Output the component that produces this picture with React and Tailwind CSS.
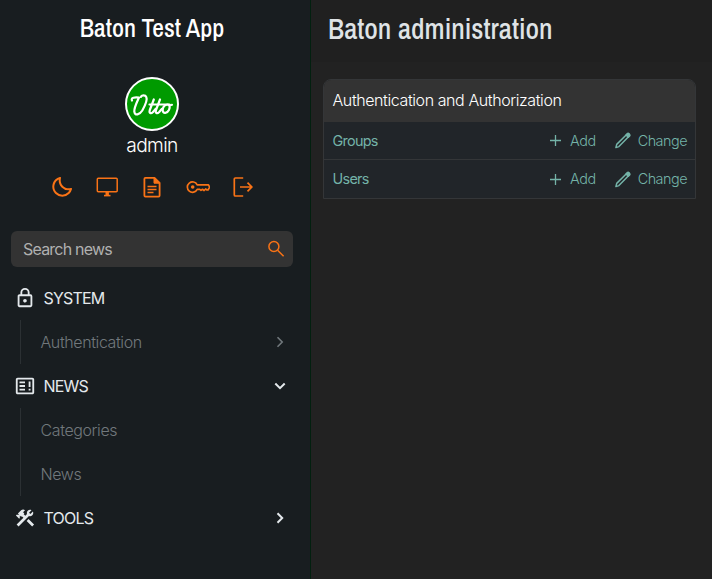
import React from "react";
import { BiMoon } from "react-icons/bi";

const stroke = { fill: "none", stroke: "currentColor" };

const Monitor = () => (
  <svg className="size-6" viewBox="0 0 24 24" {...stroke} strokeWidth="1.5">
    <rect x="2.300" y="3.300" width="19.900" height="13.500" rx="1" />
    <path d="M9 20.600h6.500" strokeWidth="1.600" />
    <path d="M12.200 17v4" strokeWidth="3.400" />
  </svg>
);
const Document = () => (
  <svg className="size-6" viewBox="0 0 24 24" {...stroke} strokeWidth="1.8">
    <path d="M14.5 2.9H5.4a1 1 0 0 0-1 1v16.7a1 1 0 0 0 1 1h13.2a1 1 0 0 0 1-1V8z" strokeLinejoin="round" />
    <path d="M14 3v5.2h5.5z" fill="currentColor" strokeWidth="1" />
    <path d="M7.500 11.500h9M7.500 14.500h9M7.500 17.500h6" strokeWidth="1.4" />
  </svg>
);
const Key = () => (
  <svg className="size-6" viewBox="0 0 24 24" {...stroke} strokeWidth="1.7" strokeLinejoin="round">
    <path d="M11.200 9.800A5.200 5.200 0 1 0 11.200 14.400H13.800l1.200.9 1.500-1 1.600 1.200 1.500-1.500 1.400 1H22L23.700 12 22.300 9.800z" />
    <circle cx="6.700" cy="12" r="1.8" fill="currentColor" stroke="none" />
  </svg>
);
const Logout = () => (
  <svg className="size-6" viewBox="0 0 24 24" {...stroke} strokeWidth="1.7">
    <path d="M12.200 3H4.300a1 1 0 0 0-1 1v16a1 1 0 0 0 1 1H12.200M9 12h11.500M16.500 7.700l4.300 4.300-4.300 4.300" />
  </svg>
);
const Lock = () => (
  <svg className="size-[22px]" viewBox="0 0 24 24" fill="currentColor">
    <path d="M12,17C10.89,17 10,16.1 10,15C10,13.89 10.89,13 12,13A2,2 0 0,1 14,15A2,2 0 0,1 12,17M18,20V10H6V20H18M18,8A2,2 0 0,1 20,10V20A2,2 0 0,1 18,22H6C4.89,22 4,21.1 4,20V10C4,8.89 4.89,8 6,8H7V6A5,5 0 0,1 12,1A5,5 0 0,1 17,6V8H18M12,3A3,3 0 0,0 9,6V8H15V6A3,3 0 0,0 12,3Z" />
  </svg>
);
const Newspaper = () => (
  <svg className="size-[22px]" viewBox="0 0 24 24" fill="currentColor">
    <path d="M20 5v14H4V5h16m0-2H4c-1.1 0-2 .9-2 2v14c0 1.1.9 2 2 2h16c1.100 0 2-.9 2-2V5c0-1.100-.9-2-2-2m-2 12h-2v2h2v-2m-6 0H6v2h6v-2m0-8H6v2h6V7m0 4H6v2h6v-2m6-4h-2v6h2V7Z" />
  </svg>
);
const Tools = () => (
  <svg className="size-[22px]" viewBox="0 0 24 24" fill="currentColor">
    <path d="M13.78 15.3L19.78 21.3L21.89 19.14L15.89 13.14L13.78 15.3M17.5 10.1C17.11 10.1 16.69 10.05 16.36 9.91L4.97 21.25L2.86 19.14L10.27 11.74L8.5 9.96L7.78 10.66L6.33 9.25V12.11L5.63 12.81L2.11 9.25L2.81 8.55H5.62L4.22 7.14L7.78 3.58C8.95 2.41 10.83 2.41 12 3.58L9.89 5.74L11.3 7.14L10.59 7.85L12.38 9.63L14.2 7.75C14.06 7.42 14 7 14 6.63C14 4.66 15.56 3.11 17.5 3.11C18.09 3.11 18.61 3.25 19.08 3.53L16.41 6.2L17.91 7.7L20.58 5.03C20.86 5.5 21 6 21 6.63C21 8.55 19.45 10.1 17.5 10.1Z" />
  </svg>
);
const Search = () => (
  <svg className="size-5" viewBox="0 0 20 20" {...stroke} strokeWidth="1.5">
    <circle cx="7.900" cy="7.500" r="5" />
    <path d="M11.600 11.200l6 6" />
  </svg>
);
const Chevron = ({ down, thin }) => (
  <svg className={down ? "size-4 rotate-90" : "size-4"} viewBox="0 0 16 16" {...stroke} strokeWidth={thin ? 1.6 : 2}>
    <path d="M5.500 3.300L10.200 8l-4.700 4.700" />
  </svg>
);
const Plus = () => (
  <svg className="size-4" viewBox="0 0 16 16" {...stroke} strokeWidth="1.3">
    <path d="M8.500 3v11M3 8.500h11" />
  </svg>
);
const Pencil = () => (
  <svg className="size-[18px]" viewBox="0 0 18 18" {...stroke} strokeWidth="1.500" strokeLinejoin="round">
    <path d="M1.900 16.600l.8-3.200L12.900 3.200c.8-.8 1.500-.7 2.100-.1s.7 1.400 0 2.100L4.900 15.600z" />
    <path d="M12 4l2.300 2.300 1.500-1.600c.6-.7-1.500-2.800-2.200-2.200z" fill="currentColor" />
  </svg>
);

const Avatar = () => (
  <svg className="size-[54px]" viewBox="0 0 54 54">
    <circle cx="27" cy="27" r="26" fill="#009a00" stroke="#fff" strokeWidth="2" />
    <g fill="none" stroke="#fff" strokeWidth="2.200" strokeLinecap="round" strokeLinejoin="round">
      <path d="M7 23.500c-1.500-3 3-3.500 7-3C12 25 9 31 9.300 34.500c.5 5 5.500 3 8-1 2.500-4.500 5.500-10.500 4-13.500-1-2.200-5-2-5.500 0" />
      <path d="M28.800 22.500l-4 10.500c-1 3.300 1.200 4 3 2.300l3-3.500M24.500 27.500h20" />
      <path d="M35 22.500l-4 10.500c-1 3.300 1.200 4 3 2.300l3-3.500" />
      <path d="M42.500 27.500c-3.500 0-5 3.500-4.800 6 .4 3.500 4.500 3 6.200-.5 1.600-3.500.5-5.500-1.400-5.500" />
      <path d="M44.500 28.500l2.500-.7" />
    </g>
  </svg>
);

function MenuHeader({ icon, label, chevron }) {
  return (
    <div className="flex h-11 items-center pr-[22.500px] pl-3.5 text-[#e4e9ec]">
      {icon}
      <span className="ml-[7.500px] flex-1 text-base tracking-[-0.8px]">{label}</span>
      {chevron}
    </div>
  );
}

function MenuItems({ items }) {
  return (
    <ul className="ml-5 border-l border-[#2b3033]">
      {items.map(([label, arrow]) => (
        <li key={label} className="flex h-11 items-center justify-between pr-[22.500px] pl-[19.500px] text-[#71787c]">
          <span className="text-base font-light tracking-[-0.4px]">{label}</span>
          {arrow && <Chevron thin />}
        </li>
      ))}
    </ul>
  );
}

function ModelRow({ name, last }) {
  return (
    <div className={`flex items-center border-[#343638] pr-2 pl-[8.500px] text-[14.4px] text-[#74b3a8] ${last ? "h-[38px]" : "h-[38px] border-b"}`}>
      <span className="flex-1 tracking-[-0.7px]">{name}</span>
      <span className="flex items-center gap-[6.500px] font-light tracking-[-0.4px]"><Plus />Add</span>
      <span className="ml-[18px] flex items-center gap-[6px] font-light tracking-[-0.5px]"><Pencil />Change</span>
    </div>
  );
}

export default function App() {
  return (
    <div className="flex h-[579px] w-[712px] overflow-hidden bg-[#222222] font-['Inter',sans-serif]">
      <aside className="w-[311px] shrink-0 border-r border-[#02200f] bg-[#181d20]">
        <h1 className="flex h-14 items-center justify-center pr-1.5 font-['Archivo_Narrow','Liberation_Sans_Narrow','Liberation_Sans',sans-serif] text-[25.6px] font-medium text-white">
          <span className="whitespace-nowrap">Baton Test App</span>
        </h1>
        <div className="flex flex-col items-center pt-[21px] pr-1.5">
          <Avatar />
          <span className="mt-px text-[19.2px] leading-[27px] font-light tracking-[-0.65px] text-white">admin</span>
        </div>
        <div className="mt-[16px] flex h-6 items-center gap-[21.200px] pl-[50px] text-[#f97316]">
          <BiMoon className="size-6" />
          <Monitor />
          <Document />
          <Key />
          <Logout />
        </div>
        <div className="mt-8 mr-[17px] ml-[11px] flex h-9 items-center justify-between rounded-md bg-[#333333] pr-[7.500px] pl-3 text-[#f97316]">
          <span className="text-base tracking-[-0.8px] text-[#b0b0b0]">Search news</span>
          <Search />
        </div>
        <nav className="mt-[9px]">
          <MenuHeader icon={<Lock />} label="SYSTEM" />
          <MenuItems items={[["Authentication", true]]} />
          <MenuHeader icon={<Newspaper />} label="NEWS" chevron={<Chevron down />} />
          <MenuItems items={[["Categories"], ["News"]]} />
          <MenuHeader icon={<Tools />} label="TOOLS" chevron={<Chevron />} />
        </nav>
      </aside>
      <main className="flex-1">
        <header className="flex h-[62px] items-center bg-[#202020] pb-1 pl-[17px]">
          <h2 className="font-['Archivo_Narrow','Liberation_Sans_Narrow','Liberation_Sans',sans-serif] text-[28.8px] font-medium whitespace-nowrap text-[#dfe3e6]">
            Baton administration
          </h2>
        </header>
        <section className="mt-[17px] mr-4 ml-3 overflow-hidden rounded-t-lg border border-[#343638] bg-[#212529]">
          <h3 className="flex h-[42px] items-center bg-[#333333] pb-0.5 pl-[8.500px] text-base font-light tracking-[-0.41px] text-white">
            Authentication and Authorization
          </h3>
          <ModelRow name="Groups" />
          <ModelRow name="Users" last />
        </section>
      </main>
    </div>
  );
}
